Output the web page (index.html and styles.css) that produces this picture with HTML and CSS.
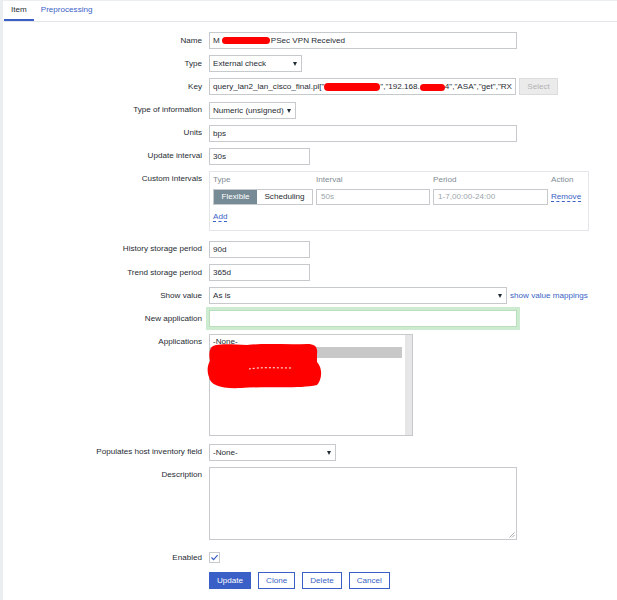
FILE: index.html
```html
<!DOCTYPE html>
<html>
<head>
<meta charset="utf-8">
<link rel="stylesheet" href="styles.css">
</head>
<body>
<div class="page">
  <div class="tabs">
    <span class="tab active">Item</span>
    <span class="tab">Preprocessing</span>
  </div>
  <div class="form">
    <div class="row">
      <div class="lbl">Name</div>
      <div class="input w308">M<span class="redact rn"></span>PSec VPN Received</div>
    </div>
    <div class="row">
      <div class="lbl">Type</div>
      <div class="input select w93">External check<span class="arrow"></span></div>
    </div>
    <div class="row">
      <div class="lbl">Key</div>
      <div class="input w307">query_lan2_lan_cisco_final.pl["<span class="redact rk1"></span>","192.168.<span class="redact rk2"></span>4","ASA","get","RX</div>
      <div class="btn-dis">Select</div>
    </div>
    <div class="row">
      <div class="lbl">Type of information</div>
      <div class="input select w87">Numeric (unsigned)<span class="arrow"></span></div>
    </div>
    <div class="row">
      <div class="lbl">Units</div>
      <div class="input w308">bps</div>
    </div>
    <div class="row">
      <div class="lbl">Update interval</div>
      <div class="input w101">30s</div>
    </div>
    <div class="row top row-iv">
      <div class="lbl">Custom intervals</div>
      <div class="intervals">
        <div class="ivgrid">
          <div class="ivhead">Type</div>
          <div class="ivhead">Interval</div>
          <div class="ivhead">Period</div>
          <div class="ivhead">Action</div>
          <div class="toggle"><span class="tg tg-on">Flexible</span><span class="tg tg-off">Scheduling</span></div>
          <div class="input ph">50s</div>
          <div class="input ph">1-7,00:00-24:00</div>
          <div><span class="dlink">Remove</span></div>
        </div>
        <div class="addline"><span class="dlink">Add</span></div>
      </div>
    </div>
    <div class="row">
      <div class="lbl">History storage period</div>
      <div class="input w101">90d</div>
    </div>
    <div class="row">
      <div class="lbl">Trend storage period</div>
      <div class="input w101">365d</div>
    </div>
    <div class="row">
      <div class="lbl">Show value</div>
      <div class="input select w298">As is<span class="arrow"></span></div>
      <span class="link vm">show value mappings</span>
    </div>
    <div class="row">
      <div class="lbl">New application</div>
      <div class="input focus w308"></div>
    </div>
    <div class="row top row-apps">
      <div class="lbl">Applications</div>
      <div class="listbox">
        <div class="lb-items">
          <div class="lb-item">-None-</div>
          <div class="lb-item sel">&nbsp;</div>
          <div class="lb-item">&nbsp;</div>
          <div class="lb-item">&nbsp;</div>
        </div>
        <div class="lb-scroll"></div>
        <svg class="blob" width="120" height="50" viewBox="0 0 120 50">
          <path d="M4,6 C6,1 22,2 40,3 C58,1 80,3 100,2 C108,2 111,5 110,12 L110,20 C116,26 115,38 110,43 C92,47 62,44 34,46 C14,47 3,43 2,35 C0,30 0,24 3,19 C2,14 2,9 4,6 Z" fill="#ff0000"/>
          <path d="M42,27 C52,25 70,26 86,26" stroke="#ffffff" stroke-width="1" fill="none" stroke-dasharray="2 2"/>
        </svg>
      </div>
    </div>
    <div class="row">
      <div class="lbl">Populates host inventory field</div>
      <div class="input select w127">-None-<span class="arrow"></span></div>
    </div>
    <div class="row top">
      <div class="lbl">Description</div>
      <div class="textarea">
        <svg class="grip" width="6" height="6" viewBox="0 0 6 6"><path d="M5.5,0.5 L0.5,5.5 M5.5,3 L3,5.5" stroke="#9a9a9a" stroke-width="0.8" fill="none"/></svg>
      </div>
    </div>
    <div class="row row-en">
      <div class="lbl">Enabled</div>
      <div class="check"><svg width="9" height="9" viewBox="0 0 9 9"><path d="M1.5,4.5 L3.6,6.6 L7.6,2.2" stroke="#3a5fc6" stroke-width="1.2" fill="none"/></svg></div>
    </div>
    <div class="btns">
      <span class="btn primary">Update</span>
      <span class="btn">Clone</span>
      <span class="btn">Delete</span>
      <span class="btn">Cancel</span>
    </div>
  </div>
</div>
</body>
</html>
```
FILE: styles.css
```css
body {
  margin: 0;
  background: #ebeef0;
  font-family: "Liberation Sans", Arial, sans-serif;
  font-size: 8.1px;
  color: #1f2c33;
}
.page {
  margin: 1px 0 0 3px;
  background: #ffffff;
  min-height: 599px;
}
.tabs {
  display: flex;
  height: 20px;
  border-bottom: 1px solid #e4e7e9;
  padding-left: 1px;
}
.tab {
  padding: 0 7px;
  line-height: 18px;
  border-bottom: 2px solid transparent;
  color: #3a5fc6;
}
.tab.active {
  color: #1f2c33;
  border-bottom-color: #3a5fc6;
}
.form {
  padding-top: 10px;
}
.row {
  display: flex;
  align-items: center;
  margin-bottom: 6.2px;
}
.row.top {
  align-items: flex-start;
}
.lbl {
  flex: none;
  width: 199px;
  margin-right: 7px;
  text-align: right;
  line-height: 16px;
  white-space: nowrap;
}
.input {
  position: relative;
  flex: none;
  height: 17px;
  box-sizing: border-box;
  border: 1px solid #c6cacd;
  background: #ffffff;
  padding: 0 3px;
  line-height: 15px;
  white-space: nowrap;
  overflow: hidden;
}
.select {
  padding-right: 14px;
}
.arrow {
  position: absolute;
  right: 4px;
  top: 6px;
  width: 0;
  height: 0;
  border-left: 2.5px solid transparent;
  border-right: 2.5px solid transparent;
  border-top: 4px solid #1f2c33;
}
.w308 { width: 308px; }
.w307 { width: 307px; }
.w298 { width: 298px; }
.w127 { width: 127px; }
.w101 { width: 101px; }
.w93 { width: 93px; }
.w87 { width: 87px; }
.redact {
  display: inline-block;
  background: #ff0000;
  border-radius: 4px;
  vertical-align: middle;
}
.rn { width: 48px; height: 7px; margin: 0 1px 0 2px; }
.rk1 { width: 56px; height: 8px; border-radius: 5px; }
.rk2 { width: 25px; height: 7px; }
.btn-dis {
  margin-left: 3px;
  width: 39px;
  height: 17px;
  box-sizing: border-box;
  background: #ebebeb;
  border: 1px solid #dcdcdc;
  color: #b3b3b3;
  text-align: center;
  line-height: 15px;
}
.row-iv {
  margin-bottom: 9.8px;
}
.intervals {
  width: 380px;
  box-sizing: border-box;
  border: 1px solid #e3e6e8;
  padding: 3px 3px 8px;
}
.ivgrid {
  display: grid;
  grid-template-columns: 100px 114px 115px auto;
  column-gap: 3px;
  row-gap: 4px;
  align-items: center;
}
.ivhead {
  line-height: 10px;
  color: #7f8c93;
}
.toggle {
  display: flex;
  width: 100px;
  height: 16px;
  box-sizing: border-box;
  border: 1px solid #c6cacd;
}
.tg {
  line-height: 14px;
  text-align: center;
}
.tg-on {
  width: 43px;
  background: #778b96;
  color: #ffffff;
}
.tg-off {
  flex: 1;
  color: #1f2c33;
}
.intervals .input {
  height: 16px;
  line-height: 14px;
  padding-left: 4px;
}
.ph {
  color: #9ba6ac;
}
.dlink {
  color: #3a5fc6;
  border-bottom: 1px dashed #3a5fc6;
  line-height: 10px;
}
.addline {
  margin-top: 7px;
  line-height: 10px;
  height: 10px;
}
.link {
  color: #3a5fc6;
}
.vm {
  margin-left: 3px;
}
.focus {
  border-color: #b9dfbc;
  box-shadow: 0 0 0 3px #cdebd0;
}
.row-apps {
  margin-bottom: 8px;
}
.listbox {
  position: relative;
  display: flex;
  width: 204px;
  height: 102px;
  box-sizing: border-box;
  border: 1px solid #c6cacd;
}
.lb-items {
  flex: 1;
  padding-top: 1px;
  margin-right: 3px;
}
.lb-item {
  line-height: 11px;
  height: 11px;
  padding-left: 3px;
}
.lb-item.sel {
  background: #c8c8c8;
}
.lb-scroll {
  width: 7px;
  background: #e6e6e6;
}
.blob {
  position: absolute;
  left: -3px;
  top: 7px;
}
.textarea {
  position: relative;
  width: 308px;
  height: 73px;
  box-sizing: border-box;
  border: 1px solid #c6cacd;
}
.grip {
  position: absolute;
  right: 1px;
  bottom: 1px;
}
.row-en {
  margin-top: 9.2px;
  height: 17px;
}
.check {
  width: 11px;
  height: 11px;
  box-sizing: border-box;
  border: 1px solid #c6cacd;
  display: flex;
  align-items: center;
  justify-content: center;
}
.check svg {
  display: block;
}
.btns {
  display: flex;
  gap: 7px;
  margin-left: 206px;
}
.btn {
  height: 17px;
  box-sizing: border-box;
  padding: 0 7px;
  border: 1px solid #3a5fc6;
  color: #3a5fc6;
  background: #ffffff;
  line-height: 15px;
}
.btn.primary {
  background: #3a5fc6;
  color: #ffffff;
}
```
